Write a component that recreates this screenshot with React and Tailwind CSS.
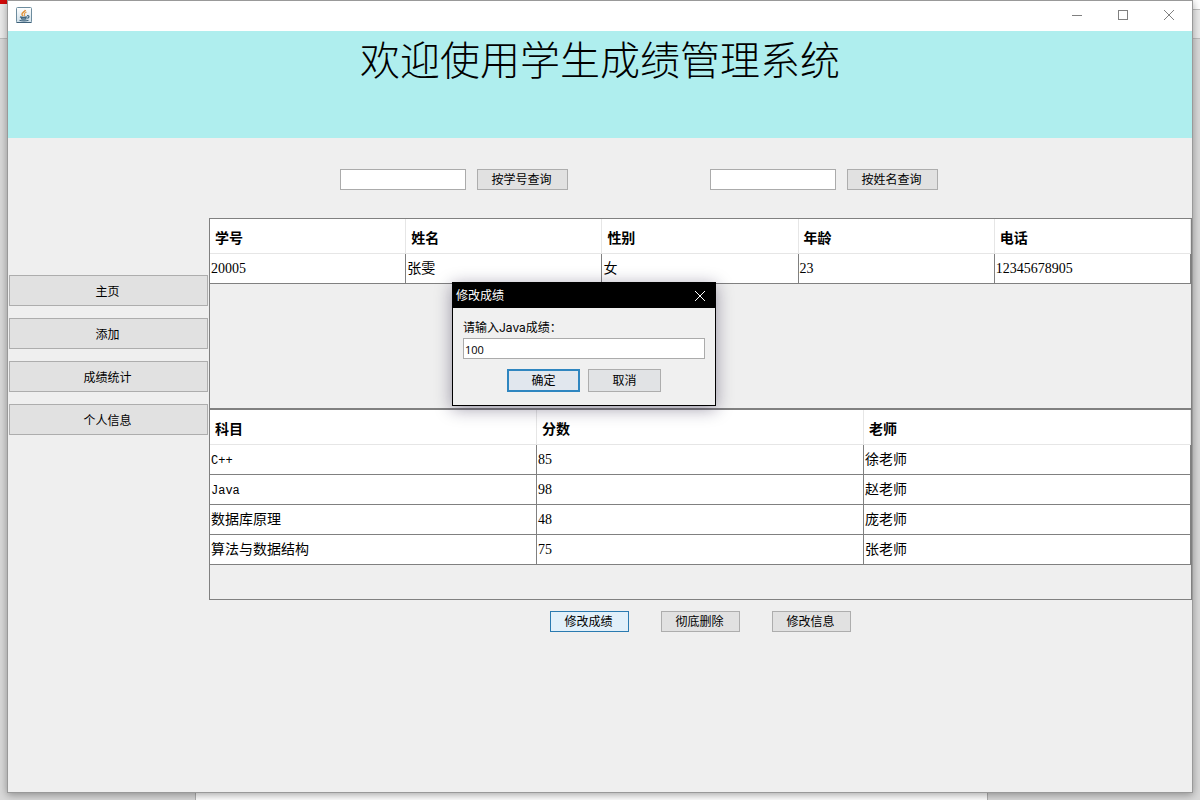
import { useState } from "react";

const students = [
  { id: "20005", name: "张雯", gender: "女", age: "23", phone: "12345678905" },
];

const scores = [
  { subject: "C++", score: "85", teacher: "徐老师" },
  { subject: "Java", score: "98", teacher: "赵老师" },
  { subject: "数据库原理", score: "48", teacher: "庞老师" },
  { subject: "算法与数据结构", score: "75", teacher: "张老师" },
];

const menu = ["主页", "添加", "成绩统计", "个人信息"];

function JavaIcon() {
  return (
    <svg width="16" height="16" viewBox="0 0 16 16" fill="none">
      <defs>
        <linearGradient id="tile" x1="0" y1="0" x2="0" y2="1">
          <stop offset="0" stopColor="#ffffff" />
          <stop offset="1" stopColor="#cfdfe8" />
        </linearGradient>
      </defs>
      <rect x="0.5" y="0.5" width="15" height="15" rx="1" fill="url(#tile)" stroke="#6d8c9e" />
      <path d="M0.5 15.5h15" stroke="#3f617a" />
      <path d="M9.500 3C9 4.800 5.500 5.500 6 7.500c.2.700.8 1 1 1.500" stroke="#e0923a" strokeWidth="1.500" />
      <path d="M10.500 5C9 5.800 8 6.500 8.500 7.400c.3.6.2 1.200-.3 1.600" stroke="#e8a050" strokeWidth="1.200" />
      <path d="M4 9.800c1.500.7 5.500.7 7 0M5 11.500c1.500.6 4 .6 5.500 0" stroke="#41667f" strokeWidth="1.400" />
      <path d="M11 8.800c2.500-.7 2.700 1.800.3 2.500M3.500 13.200c2 .8 7 .8 9 0" stroke="#41667f" strokeWidth="1.200" />
    </svg>
  );
}

function TitleBar() {
  return (
    <header className="flex h-[30px] items-start justify-between bg-white pl-2">
      <div className="pt-1.5">
        <JavaIcon />
      </div>
      <div className="flex h-7 text-[#808080]">
        <button aria-label="最小化" className="flex w-[46px] items-center justify-center">
          <svg width="10" height="10" viewBox="0 0 10 10" stroke="currentColor">
            <path d="M0 5.500h10" />
          </svg>
        </button>
        <button aria-label="最大化" className="flex w-[46px] items-center justify-center">
          <svg width="10" height="10" viewBox="0 0 10 10" fill="none" stroke="currentColor">
            <rect x="0.5" y="0.5" width="9" height="9" />
          </svg>
        </button>
        <button aria-label="关闭" className="flex w-[46px] items-center justify-center">
          <svg width="10" height="10" viewBox="0 0 10 10" stroke="currentColor">
            <path d="M0 0l10 10M10 0L0 10" />
          </svg>
        </button>
      </div>
    </header>
  );
}

function SearchBox({ label }) {
  return (
    <form className="flex gap-[11px]" onSubmit={(e) => e.preventDefault()}>
      <input aria-label={label} className="h-[21px] w-[126px] border border-[#ababab] bg-white px-0.5" />
      <button className="h-[21px] w-[91px] border border-[#adadad] bg-[#e1e1e1] pt-px pr-0.5">{label}</button>
    </form>
  );
}

function DataTable({ columns, rows }) {
  return (
    <table className="w-full table-fixed border-separate border-spacing-0 bg-white text-sm">
      <thead>
        <tr>
          {columns.map((c) => (
            <th key={c} className="h-[35px] border-r border-b border-[#e6e6e6] p-0 pt-1 pl-[5px] text-left font-bold">
              {c}
            </th>
          ))}
        </tr>
      </thead>
      <tbody>
        {rows.map((row, i) => (
          <tr key={i}>
            {Object.values(row).map((v, j) => (
              <td
                key={j}
                className="h-[30px] border-r border-b border-[#808080] p-0 pl-px font-['Liberation_Serif','Noto_Sans_CJK_SC',serif]"
              >
                {/^[A-Z]/.test(v) ? <span className="font-['Liberation_Mono',monospace] text-xs">{v}</span> : v}
              </td>
            ))}
          </tr>
        ))}
      </tbody>
    </table>
  );
}

function ScoreDialog() {
  const [value, setValue] = useState("100");
  return (
    <div
      role="dialog"
      aria-label="修改成绩"
      className="absolute top-[282px] left-[452px] w-[264px] border border-black bg-[#f0f0f0] shadow-[0_3px_16px_rgba(20,10,50,0.4)]"
    >
      <div className="flex h-[25px] items-center justify-between bg-black pl-[3px] text-white">
        <span>修改成绩</span>
        <button aria-label="关闭" className="flex h-full w-[30px] items-center justify-center">
          <svg width="10" height="10" viewBox="0 0 10 10" stroke="currentColor">
            <path d="M0 0l10 10M10 0L0 10" />
          </svg>
        </button>
      </div>
      <div className="px-[10px] pt-[10px] pb-[13px]">
        <label htmlFor="score" className="block h-5 font-['Inter','Noto_Sans_CJK_SC',sans-serif] leading-5">
          请输入Java成绩：
        </label>
        <input
          id="score"
          value={value}
          onChange={(e) => setValue(e.target.value)}
          className="h-[21px] w-full border border-[#ababab] bg-white px-px pt-px text-[11px]"
        />
        <div className="mt-[10px] flex justify-center gap-2">
          <button className="h-[23px] w-[73px] border-2 border-[#2f86c0] bg-[#e1e7ee]">确定</button>
          <button className="h-[23px] w-[73px] border border-[#adadad] bg-[#e1e3e5]">取消</button>
        </div>
      </div>
    </div>
  );
}

function App() {
  return (
    <div className="relative flex min-h-screen flex-col bg-[#d9d9d9] px-[7px] pb-[7px] font-['Open_Sans','Noto_Sans_CJK_SC',sans-serif] text-xs text-black">
      {/* Windows left open behind */}
      <div className="absolute inset-0 flex flex-col justify-between">
        <div className="h-[39px] border-b border-[#bdbdbd] bg-[#ebebeb]">
          <div className="flex h-[10px] justify-between">
            <div className="h-1 w-2 bg-[#d20a0a]"></div>
            <div className="w-2 border-b border-[#bdbdbd] bg-white"></div>
          </div>
        </div>
        <div className="mr-[212px] ml-[195px] h-2 border-x border-[#b0b0b0] bg-white"></div>
      </div>

      <div className="relative flex flex-1 flex-col border border-[#999999] bg-[#efefef] shadow-[0_2px_8px_rgba(0,0,0,0.35)]">
        <TitleBar />
        <div className="h-[107px] bg-[#afeeee] text-center">
          <h1 className="font-['Noto_Sans_CJK_SC',sans-serif] text-[40px] leading-[54px] font-light">欢迎使用学生成绩管理系统</h1>
        </div>

        <div className="flex flex-1">
          <nav className="flex w-[201px] shrink-0 flex-col gap-3 px-px pt-[137px]">
            {menu.map((m) => (
              <button key={m} className="h-[31px] border border-[#adadad] bg-[#e1e1e1] pt-0.5 pr-0.5">
                {m}
              </button>
            ))}
          </nav>

          <main className="min-w-0 flex-1">
            <div className="flex h-20 gap-[142px] pt-[31px] pl-[131px]">
              <SearchBox label="按学号查询" />
              <SearchBox label="按姓名查询" />
            </div>
            <div className="h-[190px] border border-b-0 border-[#808080]">
              <DataTable columns={["学号", "姓名", "性别", "年龄", "电话"]} rows={students} />
            </div>
            <div className="h-[192px] border border-t-2 border-[#808080]">
              <DataTable columns={["科目", "分数", "老师"]} rows={scores} />
            </div>
            <div className="mt-[11px] flex justify-center gap-8">
              <button className="h-[21px] w-[79px] border border-[#2a7ab0] bg-[#e1f0fa] pt-px pr-0.5">修改成绩</button>
              <button className="h-[21px] w-[79px] border border-[#adadad] bg-[#e1e1e1] pt-px pr-0.5">彻底删除</button>
              <button className="h-[21px] w-[79px] border border-[#adadad] bg-[#e1e1e1] pt-px pr-0.5">修改信息</button>
            </div>
          </main>
        </div>
      </div>

      <ScoreDialog />
    </div>
  );
}

export default App;
